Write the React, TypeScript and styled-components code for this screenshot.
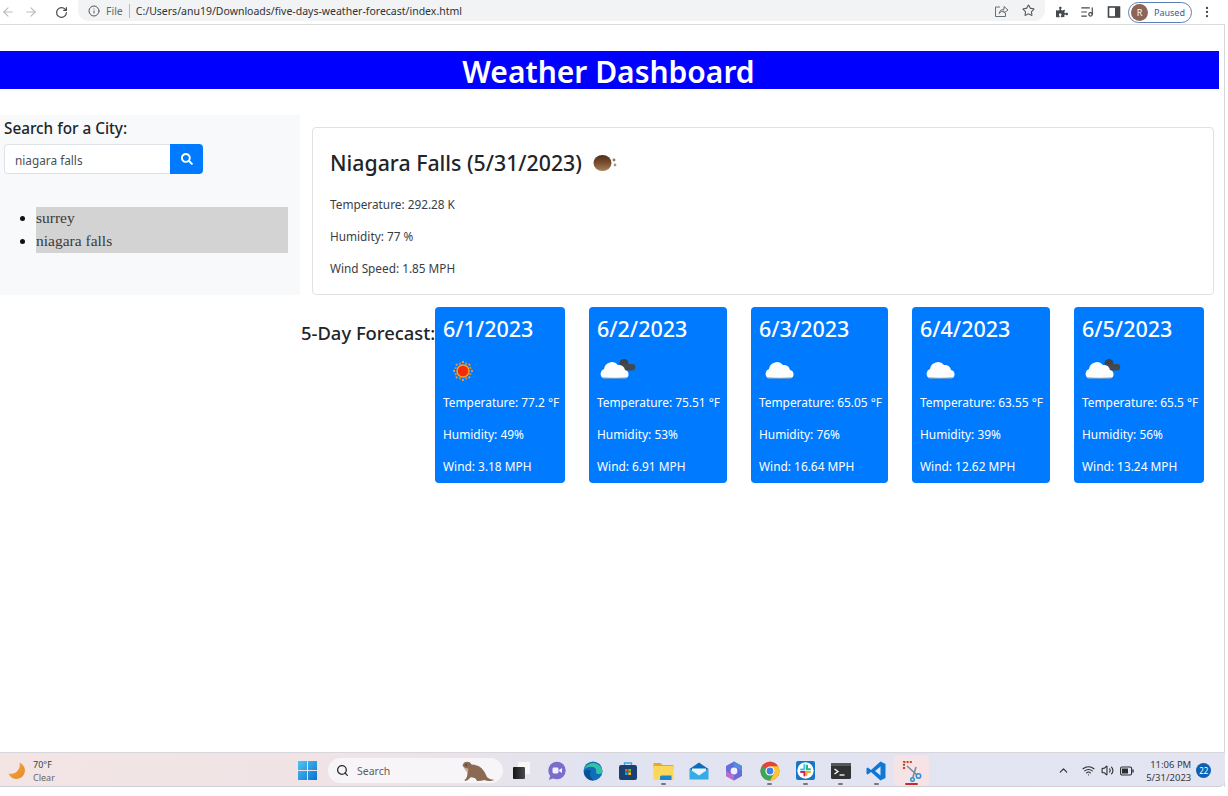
import React from "react";
import styled, { createGlobalStyle } from "styled-components";
import { FaSearch, FaPuzzlePiece } from "react-icons/fa";
import { ArrowLeft, ArrowRight, RotateCw, Info, Star, ListMusic, ChevronUp, Search, Wifi, Volume2, EllipsisVertical } from "lucide-react";

const GlobalStyle = createGlobalStyle`
    html, body { margin: 0; padding: 0; background: #fff; }
    body { font-family: "Noto Sans", "Open Sans", sans-serif; color: #212529; }
    * { box-sizing: border-box; }
`;

const Window = styled.div`
    width: 1225px;
    height: 787px;
    display: flex;
    flex-direction: column;
    border-right: 1px solid #d8d8d8;
`;

/* browser toolbar */
const Toolbar = styled.div`
    height: 25px;
    flex: none;
    display: flex;
    align-items: center;
    border-bottom: 1px solid #dcdcdc;
    margin-right: -1px;
    background: #fff;
`;

const NavButton = styled.span<{ $w: number; $dim?: boolean }>`
    width: ${(p) => p.$w}px;
    flex: none;
    display: flex;
    justify-content: center;
    color: ${(p) => (p.$dim ? "#b9bcc0" : "#45484c")};
`;

const Omnibox = styled.div`
    width: 967px;
    height: 21px;
    margin: 0 4px 3px 2px;
    padding: 0 9px 0 10px;
    flex: none;
    display: flex;
    align-items: center;
    background: #f1f3f4;
    border-radius: 0 0 11px 11px;
    font-size: 10.5px;
    color: #303236;
`;

const Scheme = styled.span`
    color: #66696d;
    margin-left: 6px;
    padding-right: 6px;
    margin-right: 6px;
    border-right: 1px solid #b8babd;
    line-height: 14px;
`;

const OmniActions = styled.span`
    margin-left: auto;
    display: flex;
    gap: 13px;
    color: #55585c;
    align-items: center;
    padding-right: 1px;
`;

const ProfilePill = styled.div`
    width: 64px;
    height: 21px;
    margin-left: -1px;
    flex: none;
    display: flex;
    align-items: center;
    gap: 6px;
    padding-left: 2px;
    border: 1px solid #5f7fb4;
    border-radius: 11px;
    font-size: 9px;
    color: #2e5ea6;
`;

const Avatar = styled.span`
    width: 17px;
    height: 17px;
    border-radius: 50%;
    background: #8b6557;
    color: #fff;
    font-size: 9px;
    display: flex;
    align-items: center;
    justify-content: center;
`;

/* page */
const Page = styled.main`
    flex: 1;
    display: flex;
    flex-direction: column;
    padding-top: 26px;
    min-height: 0;
`;

const Banner = styled.h1`
    width: 1219px;
    height: 38px;
    margin: 0 0 26px;
    background: #0000ff;
    color: #fff;
    font-size: 30px;
    font-weight: 600;
    line-height: 41px;
    text-align: center;
    padding-right: 2px;
`;

const TopRow = styled.section`
    display: flex;
    align-items: flex-start;
`;

const Sidebar = styled.aside`
    width: 300px;
    height: 180px;
    flex: none;
    background: #f8f9fa;
    padding: 3px 12px 0 4px;
`;

const SearchLabel = styled.label`
    display: block;
    height: 26px;
    font-size: 15.3px;
    font-weight: 500;
    line-height: 20px;
`;

const SearchGroup = styled.div`
    display: flex;
    height: 30px;
`;

const CityInput = styled.input`
    width: 166px;
    height: 30px;
    padding: 2px 10px 0;
    border: 1px solid #dfe3e7;
    border-right: 0;
    border-radius: 4px 0 0 4px;
    background: #fff;
    font: 11.8px "Noto Sans", sans-serif;
    color: #495057;
    outline: none;
`;

const SearchButton = styled.button`
    width: 33px;
    height: 30px;
    border: 0;
    border-radius: 0 4px 4px 0;
    background: #007bff;
    color: #fff;
    display: flex;
    align-items: center;
    justify-content: center;
    padding: 0;
`;

const HistoryList = styled.ul`
    margin: 33px 0 0;
    padding: 0 0 0 32px;
    font-family: "Liberation Serif", serif;
    font-size: 15.5px;
    line-height: 21px;
    color: #3a3a3a;
`;

const HistoryItem = styled.li`
    background: #d3d3d3;
    padding-bottom: 2px;
    &::marker { color: #111; }
`;

const CurrentCard = styled.article`
    width: 902px;
    height: 168px;
    margin: 12px 0 0 12px;
    padding: 19px 17px 0;
    border: 1px solid #dfe1e4;
    border-radius: 4px;
    background: #fff;
`;

const CityTitle = styled.h2`
    margin: 0 0 17px;
    display: flex;
    align-items: center;
    gap: 11px;
    height: 30px;
    font-size: 21.3px;
    font-weight: 500;
`;

const CurrentLine = styled.p`
    margin: 0;
    height: 32px;
    line-height: 20px;
    font-size: 11.8px;
    color: #3a3e44;
`;

const ForecastRow = styled.section`
    display: flex;
    align-items: flex-start;
    margin-top: 12px;
    padding-left: 301px;
`;

const ForecastLabel = styled.h3`
    width: 134px;
    flex: none;
    margin: 14px 0 0;
    font-size: 18.4px;
    font-weight: 500;
    line-height: 24px;
    white-space: nowrap;
`;

const ForecastGrid = styled.div`
    display: grid;
    grid-template-columns: 130px 138px 137px 138px 130px;
    gap: 24px;
`;

const DayCard = styled.div`
    height: 176px;
    padding: 7px 0 0 8px;
    background: #007bff;
    border-radius: 4px;
    color: #fff;
    white-space: nowrap;
`;

const DayDate = styled.div`
    height: 31px;
    font-size: 21.5px;
    font-weight: 500;
    line-height: 30px;
`;

const DayIcon = styled.div`
    height: 47px;
    display: flex;
    align-items: center;
    padding-top: 5px;
`;

const DayLine = styled.div`
    height: 32px;
    font-size: 11.9px;
    line-height: 20px;
`;

/* windows taskbar */
const Taskbar = styled.footer`
    height: 35px;
    flex: none;
    display: flex;
    align-items: center;
    padding-top: 2px;
    background: linear-gradient(90deg, #f3e5e4 0%, #efe3e6 32%, #e2e3f1 48%, #e4e5f1 100%);
    border-top: 1px solid #d8d6da;
    border-bottom: 1px solid #cfcfd6;
    border-bottom-right-radius: 6px;
    margin-right: -1px;
`;

const WeatherWidget = styled.div`
    width: 298px;
    flex: none;
    display: flex;
    align-items: center;
    gap: 6px;
    padding-left: 7px;
`;

const WeatherText = styled.div`
    font-size: 9px;
    line-height: 13px;
    color: #3d3d40;
`;

const WeatherSub = styled.div`
    color: #66666a;
`;

const StartButton = styled.span`
    width: 30px;
    flex: none;
    display: flex;
`;

const TaskSearch = styled.div`
    width: 175px;
    height: 25px;
    flex: none;
    position: relative;
    display: flex;
    align-items: center;
    gap: 8px;
    padding-left: 8px;
    background: #f8f5f8;
    border-radius: 13px;
    font-size: 10.5px;
    color: #5e5e60;
`;

const Otter = styled.span`
    position: absolute;
    right: 7px;
    top: 2px;
    display: flex;
`;

const AppStrip = styled.div`
    display: flex;
    margin-left: 1px;
    height: 100%;
`;

const AppSlot = styled.span<{ $active?: boolean }>`
    width: 35.45px;
    height: 100%;
    flex: none;
    position: relative;
    display: flex;
    align-items: center;
    justify-content: center;
    background: ${(p) => (p.$active ? "#f6e3e6" : "transparent")};
    border-radius: 4px;
`;

const RunDot = styled.i<{ $active?: boolean }>`
    position: absolute;
    left: 50%;
    bottom: 1px;
    width: ${(p) => (p.$active ? 13 : 5)}px;
    height: 2px;
    margin-left: ${(p) => (p.$active ? -6.5 : -2.5)}px;
    border-radius: 1px;
    background: ${(p) => (p.$active ? "#c42b2b" : "#77777d")};
`;

const Tray = styled.div`
    margin-left: 119px;
    display: flex;
    align-items: center;
    color: #2c2c30;
    font-size: 9.5px;
`;

const TrayIcon = styled.span<{ $w: number }>`
    width: ${(p) => p.$w}px;
    display: flex;
    justify-content: center;
`;

const Clock = styled.div`
    width: 49px;
    margin-left: 5px;
    text-align: right;
    line-height: 13px;
    color: #38383c;
    white-space: nowrap;
`;

const Badge = styled.span`
    width: 15px;
    height: 15px;
    margin-left: 5px;
    border-radius: 50%;
    background: #0b62b5;
    color: #fff;
    font-size: 8px;
    display: flex;
    align-items: center;
    justify-content: center;
`;

const SideIcon = () => (
    <svg width="14" height="14" viewBox="0 0 14 14">
        <rect x="1.5" y="2" width="11" height="10" fill="none" stroke="#45484c" strokeWidth="1.6" />
        <rect x="8" y="2" width="4.5" height="10" fill="#45484c" />
    </svg>
);

const ShareIcon = () => (
    <svg width="15" height="14" viewBox="0 0 15 14" fill="none" stroke="#6a6d71" strokeWidth="1">
        <path d="M6 3 H1.5 V12.5 H11.5 V9" />
        <path d="M5 9.5 Q5.5 5.5 10 5.2 V2.5 L14 6 L10 9 V7 Q7 7 5 9.5 z" />
    </svg>
);

const BrownMoon = () => (
    <svg width="26" height="20" viewBox="0 0 26 20">
        <defs>
            <linearGradient id="ball" x1="0" y1="0" x2="0" y2="1">
                <stop offset="0" stopColor="#4c2f1c" />
                <stop offset="0.5" stopColor="#7a4e2f" />
                <stop offset="1" stopColor="#a5825f" />
            </linearGradient>
        </defs>
        <ellipse cx="9.5" cy="11" rx="9" ry="8" fill="url(#ball)" />
        <circle cx="21" cy="8" r="1.4" fill="#8a7a68" />
        <circle cx="22" cy="13" r="1.4" fill="#a89a88" />
    </svg>
);

const SunIcon = () => (
    <svg width="40" height="40" viewBox="0 0 40 40">
        <g stroke="#e3963f" strokeWidth="2">
            {[0, 45, 90, 135, 180, 225, 270, 315].map((a) => (
                <line key={a} x1="20" y1="10" x2="20" y2="12" transform={`rotate(${a} 20 20)`} />
            ))}
            {[22, 67, 112, 157, 202, 247, 292, 337].map((a) => (
                <line key={a} x1="20" y1="11" x2="20" y2="13" transform={`rotate(${a} 20 20)`} stroke="#c9883e" />
            ))}
        </g>
        <circle cx="20" cy="20" r="6" fill="#f42a0c" stroke="#ffa11a" strokeWidth="1.4" />
    </svg>
);

const cloudPath = "M4 27 a5 5 0 0 1 1 -9 a8 8 0 0 1 14 -4 a6 6 0 0 1 7 5 a4.2 4.2 0 0 1 1 8 z";

const CloudIcon = ({ dark }: { dark?: boolean }) => (
    <svg width="40" height="40" viewBox="0 0 40 40">
        {dark && (
            <g transform="translate(0 -3)">
                <circle cx="27" cy="15.5" r="4.5" fill="#3f4347" />
                <path d="M22 23 a5 5 0 0 1 6 -7 h7 a3.3 3.3 0 0 1 0 6.6 h-13 z" fill="#45494e" />
            </g>
        )}
        <g transform={dark ? "translate(2 0)" : "translate(5 0)"}>
            <path d={cloudPath} fill="#fdfdfd" />
            <path d="M3.4 26 q12 1.6 24 0 l-.6 1.4 h-22.8 z" fill="#b9b7b1" />
        </g>
    </svg>
);

const Moon = () => (
    <svg width="20" height="20" viewBox="0 0 20 20">
        <defs>
            <linearGradient id="tbMoon" x1="0" y1="0" x2="1" y2="1">
                <stop offset="0" stopColor="#f7a93a" />
                <stop offset="1" stopColor="#e78a2c" />
            </linearGradient>
        </defs>
        <path d="M12.5 1.5 a8.5 8.5 0 1 1 -11 11 a9 9 0 0 0 11 -11 z" fill="url(#tbMoon)" />
    </svg>
);

const WinLogo = () => (
    <svg width="19" height="19" viewBox="0 0 19 19">
        <defs>
            <linearGradient id="win" x1="0" y1="0" x2="1" y2="1">
                <stop offset="0" stopColor="#4fc5f5" />
                <stop offset="1" stopColor="#0a72cf" />
            </linearGradient>
        </defs>
        <path d="M0 0h9v9H0zM10 0h9v9h-9zM0 10h9v9H0zM10 10h9v9h-9z" fill="url(#win)" />
    </svg>
);

const OtterIcon = () => (
    <svg width="36" height="21" viewBox="0 0 38 23">
        <path d="M2 6 q1 -4 5 -4 q4 0 5 3 q6 0 11 4 q4 4 6 10 q3 3 8 3 q-6 2 -11 0 q-3 1 -8 1 l-2 -3 q-3 -1 -5 -1 q-2 3 -6 4 l-1 -1 q2 -1 3 -4 q1 -5 0 -8 q-3 -1 -5 -4 z" fill="#8a6a52" />
        <path d="M2.5 7 q3 3 6 2 q0 3 -1 5 q-2 -2 -3 -4 z" fill="#c9b39c" />
        <circle cx="6" cy="5.5" r="0.8" fill="#222" />
    </svg>
);

const TaskViewIcon = () => (
    <svg width="19" height="19" viewBox="0 0 19 19">
        <defs>
            <linearGradient id="tv" x1="0" y1="0" x2="1" y2="0">
                <stop offset="0" stopColor="#151517" />
                <stop offset="1" stopColor="#4a4a4e" />
            </linearGradient>
        </defs>
        <rect x="6" y="1" width="12" height="12" rx="1" fill="#f7f7f8" />
        <rect x="1" y="6" width="12" height="12" rx="1" fill="url(#tv)" />
    </svg>
);

const ChatIcon = () => (
    <svg width="20" height="20" viewBox="0 0 20 20">
        <circle cx="10" cy="9.5" r="8.7" fill="#7a6ecb" />
        <path d="M3 15 l-1 4 l5 -2 z" fill="#7a6ecb" />
        <rect x="5.5" y="6.5" width="6" height="6" rx="1.4" fill="#f2f1fb" />
        <path d="M12 9 l3 -2 v5 l-3 -2 z" fill="#f2f1fb" />
    </svg>
);

const EdgeIcon = () => (
    <svg width="20" height="20" viewBox="0 0 20 20">
        <circle cx="10" cy="10" r="9.5" fill="#0f6fb8" />
        <path d="M1 9 a9.5 9.5 0 0 1 18.5 1 q0 3 -3.5 3 q-3 0 -3 -2 q1 -4 -3 -5 q-6 -1 -9 3 z" fill="#35c1a6" />
        <path d="M8 10 q-3 5 3 9.5 a9 9 0 0 1 -10 -9 q3 -3 7 -.5 z" fill="#0b4f94" />
    </svg>
);

const StoreIcon = () => (
    <svg width="20" height="20" viewBox="0 0 20 20">
        <path d="M6.5 4 v-2 h7 v2" fill="none" stroke="#3fa1df" strokeWidth="1.4" />
        <rect x="1" y="4" width="18" height="15" rx="2" fill="#1a3f72" />
        <rect x="7" y="8" width="2.7" height="2.7" fill="#f35325" />
        <rect x="10.3" y="8" width="2.7" height="2.7" fill="#81bc06" />
        <rect x="7" y="11.3" width="2.7" height="2.7" fill="#05a6f0" />
        <rect x="10.3" y="11.3" width="2.7" height="2.7" fill="#ffba08" />
    </svg>
);

const FolderIcon = () => (
    <svg width="21" height="20" viewBox="0 0 21 20">
        <path d="M0.5 2 h7 l2 2 h11 v4 h-20 z" fill="#e3a92a" />
        <rect x="0.5" y="5" width="20" height="14" rx="1" fill="#fbd85a" />
        <path d="M7 19 v-3 q0 -1.5 1.5 -1.5 h10 v4.5 z" fill="#1c86cf" />
    </svg>
);

const MailIcon = () => (
    <svg width="20" height="18" viewBox="0 0 20 18">
        <path d="M0.5 7 l9.5 -6.5 l9.5 6.5 l-9.5 6 z" fill="#0c6fb8" />
        <path d="M3 6.5 h14 v3 l-7 4 l-7 -4 z" fill="#e8f3fb" />
        <path d="M0.5 7 v10.5 h19 V7 l-9.5 6.5 z" fill="#35ace6" />
    </svg>
);

const CopilotIcon = () => (
    <svg width="18" height="20" viewBox="0 0 18 20">
        <path d="M9 0.5 l8 4.6 v9.8 l-8 4.6 l-8 -4.6 v-9.8 z" fill="#6a6ad8" />
        <path d="M9 0.5 l8 4.6 v5 l-8 -4.6 z" fill="#4f8fe0" />
        <path d="M1 10 l8 4.6 v4.9 l-8 -4.6 z" fill="#c06ad0" />
        <circle cx="9" cy="10" r="3.4" fill="#eef" />
    </svg>
);

const ChromeIcon = () => (
    <svg width="20" height="20" viewBox="0 0 20 20">
        <circle cx="10" cy="10" r="9.5" fill="#e0453a" />
        <path d="M10 10 L1.8 5.2 A9.5 9.5 0 0 0 10 19.5 L14.8 11 z" fill="#3aa757" />
        <path d="M10 5.2 H18.2 A9.5 9.5 0 0 1 10 19.5 L14.8 11 z" fill="#fbc62f" />
        <circle cx="10" cy="10" r="4.6" fill="#fff" />
        <circle cx="10" cy="10" r="3.4" fill="#3f7fe6" />
    </svg>
);

const SlackIcon = () => (
    <svg width="19" height="19" viewBox="0 0 19 19">
        <rect width="19" height="19" rx="2" fill="#1677c9" />
        <circle cx="9.5" cy="9.5" r="8.2" fill="#fff" />
        <path d="M8.4 4 v4" stroke="#36c5f0" strokeWidth="2" strokeLinecap="round" />
        <path d="M5 8.4 h3" stroke="#36c5f0" strokeWidth="2" strokeLinecap="round" />
        <path d="M11 4.6 v3.6 h3" stroke="#2eb67d" strokeWidth="2" strokeLinecap="round" fill="none" />
        <path d="M14 11 h-3.6 v3" stroke="#ecb22e" strokeWidth="2" strokeLinecap="round" fill="none" />
        <path d="M8.4 14.4 v-3.4 h-3.4" stroke="#e01e5a" strokeWidth="2" strokeLinecap="round" fill="none" />
    </svg>
);

const TerminalIcon = () => (
    <svg width="20" height="16" viewBox="0 0 20 16">
        <rect width="20" height="16" rx="1.5" fill="#2f3133" />
        <rect width="20" height="3" fill="#55585a" />
        <path d="M3.5 6 l3.5 2.5 l-3.5 2.5" fill="none" stroke="#fff" strokeWidth="1.3" />
        <path d="M8.5 12 h5" stroke="#fff" strokeWidth="1.3" />
    </svg>
);

const VsCodeIcon = () => (
    <svg width="20" height="20" viewBox="0 0 20 20">
        <path d="M14.5 0.5 L19.5 3 V17 L14.5 19.5 L5 11 L1.8 13.5 L0.5 12.7 V7.3 L1.8 6.5 L5 9 z M14.5 5.5 L9 10 L14.5 14.5 z" fill="#0f78d4" fillRule="evenodd" />
    </svg>
);

const SnipIcon = () => (
    <svg width="20" height="22" viewBox="0 0 20 22">
        <path d="M2 9 V2 H10" fill="none" stroke="#c8402b" strokeWidth="2.2" strokeDasharray="2 1.2" />
        <path d="M5 6 L15 15 M14 7 L11 17" stroke="#7c8a94" strokeWidth="1.6" />
        <circle cx="16.5" cy="16" r="2.2" fill="none" stroke="#2b8fd0" strokeWidth="1.5" />
        <circle cx="10.5" cy="19.5" r="1.8" fill="none" stroke="#2b8fd0" strokeWidth="1.5" />
    </svg>
);

const BatteryIcon = () => (
    <svg width="14" height="10" viewBox="0 0 14 10">
        <rect x="0.6" y="1" width="11" height="8" rx="1.5" fill="none" stroke="#2c2c30" strokeWidth="1.1" />
        <rect x="2" y="2.5" width="6" height="5" fill="#2c2c30" />
        <rect x="12.4" y="3.5" width="1.3" height="3" fill="#2c2c30" />
    </svg>
);

const forecast = [
    { date: "6/1/2023", icon: <SunIcon />, temp: "77.2", humidity: 49, wind: "3.18" },
    { date: "6/2/2023", icon: <CloudIcon dark />, temp: "75.51", humidity: 53, wind: "6.91" },
    { date: "6/3/2023", icon: <CloudIcon />, temp: "65.05", humidity: 76, wind: "16.64" },
    { date: "6/4/2023", icon: <CloudIcon />, temp: "63.55", humidity: 39, wind: "12.62" },
    { date: "6/5/2023", icon: <CloudIcon dark />, temp: "65.5", humidity: 56, wind: "13.24" },
];

const apps = [
    { icon: <TaskViewIcon /> },
    { icon: <ChatIcon /> },
    { icon: <EdgeIcon /> },
    { icon: <StoreIcon /> },
    { icon: <FolderIcon />, running: true },
    { icon: <MailIcon /> },
    { icon: <CopilotIcon /> },
    { icon: <ChromeIcon />, running: true },
    { icon: <SlackIcon />, running: true },
    { icon: <TerminalIcon />, running: true },
    { icon: <VsCodeIcon />, running: true },
    { icon: <SnipIcon />, active: true },
];

export default function App() {
    return (
        <>
            <GlobalStyle />
            <Window>
                <Toolbar>
                    <NavButton $w={15} $dim><ArrowLeft size={14} /></NavButton>
                    <NavButton $w={31} $dim><ArrowRight size={14} /></NavButton>
                    <NavButton $w={30}><RotateCw size={13} strokeWidth={2.2} /></NavButton>
                    <Omnibox>
                        <Info size={12} color="#55585c" />
                        <Scheme>File</Scheme>
                        C:/Users/anu19/Downloads/five-days-weather-forecast/index.html
                        <OmniActions>
                            <ShareIcon />
                            <Star size={13} />
                        </OmniActions>
                    </Omnibox>
                    <NavButton $w={26}><FaPuzzlePiece size={12} /></NavButton>
                    <NavButton $w={24}><ListMusic size={14} /></NavButton>
                    <NavButton $w={30}><SideIcon /></NavButton>
                    <ProfilePill>
                        <Avatar>R</Avatar>
                        Paused
                    </ProfilePill>
                    <NavButton $w={30}><EllipsisVertical size={14} /></NavButton>
                </Toolbar>

                <Page>
                    <Banner>Weather Dashboard</Banner>
                    <TopRow>
                        <Sidebar>
                            <SearchLabel htmlFor="city">Search for a City:</SearchLabel>
                            <SearchGroup>
                                <CityInput id="city" defaultValue="niagara falls" />
                                <SearchButton aria-label="search"><FaSearch size={12} /></SearchButton>
                            </SearchGroup>
                            <HistoryList>
                                <HistoryItem>surrey</HistoryItem>
                                <HistoryItem>niagara falls</HistoryItem>
                            </HistoryList>
                        </Sidebar>
                        <CurrentCard>
                            <CityTitle>
                                Niagara Falls (5/31/2023)
                                <BrownMoon />
                            </CityTitle>
                            <CurrentLine>Temperature: 292.28 K</CurrentLine>
                            <CurrentLine>Humidity: 77 %</CurrentLine>
                            <CurrentLine>Wind Speed: 1.85 MPH</CurrentLine>
                        </CurrentCard>
                    </TopRow>

                    <ForecastRow>
                        <ForecastLabel>5-Day Forecast:</ForecastLabel>
                        <ForecastGrid>
                            {forecast.map((day) => (
                                <DayCard key={day.date}>
                                    <DayDate>{day.date}</DayDate>
                                    <DayIcon>{day.icon}</DayIcon>
                                    <DayLine>Temperature: {day.temp} °F</DayLine>
                                    <DayLine>Humidity: {day.humidity}%</DayLine>
                                    <DayLine>Wind: {day.wind} MPH</DayLine>
                                </DayCard>
                            ))}
                        </ForecastGrid>
                    </ForecastRow>
                </Page>

                <Taskbar>
                    <WeatherWidget>
                        <Moon />
                        <WeatherText>
                            70°F
                            <WeatherSub>Clear</WeatherSub>
                        </WeatherText>
                    </WeatherWidget>
                    <StartButton><WinLogo /></StartButton>
                    <TaskSearch>
                        <Search size={13} color="#2c2c30" strokeWidth={2.4} />
                        Search
                        <Otter><OtterIcon /></Otter>
                    </TaskSearch>
                    <AppStrip>
                        {apps.map((app, i) => (
                            <AppSlot key={i} $active={app.active}>
                                {app.icon}
                                {(app.running || app.active) && <RunDot $active={app.active} />}
                            </AppSlot>
                        ))}
                    </AppStrip>
                    <Tray>
                        <TrayIcon $w={30}><ChevronUp size={13} /></TrayIcon>
                        <TrayIcon $w={20}><Wifi size={13} /></TrayIcon>
                        <TrayIcon $w={19}><Volume2 size={13} /></TrayIcon>
                        <TrayIcon $w={20}><BatteryIcon /></TrayIcon>
                        <Clock>
                            11:06 PM
                            <br />
                            5/31/2023
                        </Clock>
                        <Badge>22</Badge>
                    </Tray>
                </Taskbar>
            </Window>
        </>
    );
}
